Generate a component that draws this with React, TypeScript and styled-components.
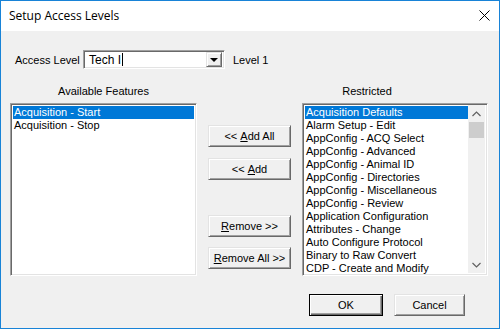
import * as React from 'react';
import styled, { createGlobalStyle } from 'styled-components';

const GlobalStyle = createGlobalStyle`
  html, body {
    margin: 0;
    padding: 0;
    background: #ffffff;
  }
  * {
    box-sizing: border-box;
  }
`;

const Window = styled.div`
  width: 500px;
  height: 329px;
  border: 1px solid #1883d7;
  display: flex;
  flex-direction: column;
  background: #f0f0f0;
  font-family: 'Liberation Sans', Arial, sans-serif;
  font-size: 11px;
  color: #000;
`;

const TitleBar = styled.div`
  height: 30px;
  background: #ffffff;
  display: flex;
  align-items: center;
  justify-content: space-between;
  padding: 0 9px 1px 8px;
`;

const Title = styled.span`
  font-family: 'Open Sans', 'Noto Sans', sans-serif;
  font-size: 12px;
  color: #000;
`;

const Body = styled.div`
  flex: 1;
  display: flex;
  flex-direction: column;
  padding: 0 10px 0 9px;
`;

const AccessRow = styled.div`
  margin-top: 19px;
  height: 19px;
  display: flex;
  align-items: center;
`;

const Label = styled.span<{ $width?: number; $left?: number }>`
  width: ${p => (p.$width ? `${p.$width}px` : 'auto')};
  padding-left: ${p => p.$left ?? 0}px;
  white-space: nowrap;
`;

const Sunken = styled.div`
  background: #ffffff;
  border: 1px solid;
  border-color: #a0a0a0 #ffffff #ffffff #a0a0a0;
  box-shadow: inset 1px 1px 0 #696969, inset -1px -1px 0 #e3e3e3;
`;

const Combo = styled(Sunken)`
  width: 142px;
  height: 19px;
  display: flex;
  align-items: center;
  padding: 2px 2px 2px 5px;
  margin-right: 8px;
`;

const ComboText = styled.span`
  flex: 1;
  display: flex;
  align-items: center;
  font-size: 12px;
`;

const Caret = styled.span`
  display: inline-block;
  width: 1px;
  height: 13px;
  background: #000;
  margin-left: 1px;
`;

const Raised = styled.div`
  background: #f0f0f0;
  border: 1px solid;
  border-color: #e3e3e3 #696969 #696969 #e3e3e3;
  box-shadow: inset 1px 1px 0 #ffffff, inset -1px -1px 0 #a0a0a0;
`;

const DropButton = styled(Raised)`
  width: 16px;
  height: 15px;
  display: flex;
  align-items: center;
  justify-content: center;
`;

const Arrow = styled.span`
  width: 0;
  height: 0;
  border-left: 4px solid transparent;
  border-right: 4px solid transparent;
  border-top: 4px solid #000;
  margin-top: 1px;
`;

const Headers = styled.div`
  margin-top: 16px;
  height: 13px;
  display: grid;
  grid-template-columns: 187px 83px 186px;
  column-gap: 11px;
  line-height: 13px;
`;

const Header = styled.span<{ $shift?: number }>`
  text-align: center;
  transform: translateX(${p => p.$shift ?? 0}px);
`;

const Main = styled.div`
  margin-top: 5px;
  display: grid;
  grid-template-columns: 187px 83px 186px;
  column-gap: 11px;
  height: 173px;
`;

const ListBox = styled(Sunken)`
  padding: 1px 2px 2px 2px;
  display: flex;
  overflow: hidden;
`;

const Items = styled.div`
  flex: 1;
  display: flex;
  flex-direction: column;
  padding-top: 1px;
`;

const Item = styled.div<{ $selected?: boolean }>`
  height: 13px;
  line-height: 13px;
  padding-left: 1px;
  white-space: nowrap;
  flex-shrink: 0;
  background: ${p => (p.$selected ? '#0078d7' : 'transparent')};
  color: ${p => (p.$selected ? '#ffffff' : '#000000')};
`;

const ScrollBar = styled.div`
  width: 17px;
  display: flex;
  flex-direction: column;
  background: #f0f0f0;
`;

const ScrollArrow = styled.div`
  height: 17px;
  display: flex;
  align-items: center;
  justify-content: center;
`;

const Track = styled.div`
  flex: 1;
`;

const Thumb = styled.div`
  height: 16px;
  margin: 0 1px;
  background: #cdcdcd;
`;

const Buttons = styled.div`
  display: flex;
  flex-direction: column;
  padding-top: 22px;
`;

const Button = styled(Raised)<{ $gap?: number; $width?: number }>`
  height: 22px;
  width: ${p => (p.$width ? `${p.$width}px` : '100%')};
  margin-top: ${p => p.$gap ?? 0}px;
  display: flex;
  align-items: center;
  justify-content: center;
  white-space: nowrap;
  font-size: 11px;
`;

const DefaultButton = styled(Button)`
  border-color: #000 #000 #000 #000;
  box-shadow: inset 1px 1px 0 #ffffff, inset -1px -1px 0 #696969,
    inset -2px -2px 0 #a0a0a0;
`;

const Footer = styled.div`
  margin-top: 18px;
  display: flex;
  justify-content: flex-end;
  gap: 11px;
  padding-right: 24px;
`;

const Chevron = ({ up }: { up?: boolean }) => (
  <svg width="9" height="6" viewBox="0 0 9 6">
    <path
      d={up ? 'M0.5 5 L4.5 1 L8.5 5' : 'M0.5 1 L4.5 5 L8.5 1'}
      fill="none"
      stroke="#606060"
      strokeWidth="1.2"
    />
  </svg>
);

const CloseIcon = () => (
  <svg width="11" height="11" viewBox="0 0 11 11">
    <path d="M0.5 0.5 L10.5 10.5 M10.5 0.5 L0.5 10.5" stroke="#000" strokeWidth="1" />
  </svg>
);

const available = ['Acquisition - Start', 'Acquisition - Stop'];

const restricted = [
  'Acquisition Defaults',
  'Alarm Setup - Edit',
  'AppConfig - ACQ Select',
  'AppConfig - Advanced',
  'AppConfig - Animal ID',
  'AppConfig - Directories',
  'AppConfig - Miscellaneous',
  'AppConfig - Review',
  'Application Configuration',
  'Attributes - Change',
  'Auto Configure Protocol',
  'Binary to Raw Convert',
  'CDP - Create and Modify',
];

export default function App() {
  return (
    <>
      <GlobalStyle />
      <Window>
        <TitleBar>
          <Title>Setup Access Levels</Title>
          <CloseIcon />
        </TitleBar>
        <Body>
          <AccessRow>
            <Label $width={73} $left={5}>Access Level</Label>
            <Combo>
              <ComboText>
                Tech I<Caret />
              </ComboText>
              <DropButton>
                <Arrow />
              </DropButton>
            </Combo>
            <Label>Level 1</Label>
          </AccessRow>

          <Headers>
            <Header>Available Features</Header>
            <span />
            <Header $shift={-28}>Restricted</Header>
          </Headers>

          <Main>
            <ListBox>
              <Items>
                {available.map((name, i) => (
                  <Item key={name} $selected={i === 0}>
                    {name}
                  </Item>
                ))}
              </Items>
            </ListBox>

            <Buttons>
              <Button>
                &lt;&lt;&nbsp;<u>A</u>dd All
              </Button>
              <Button $gap={11}>
                &lt;&lt;&nbsp;<u>A</u>dd
              </Button>
              <Button $gap={35}>
                <u>R</u>emove &gt;&gt;
              </Button>
              <Button $gap={10}>
                <u>R</u>emove All &gt;&gt;
              </Button>
            </Buttons>

            <ListBox>
              <Items>
                {restricted.map((name, i) => (
                  <Item key={name} $selected={i === 0}>
                    {name}
                  </Item>
                ))}
              </Items>
              <ScrollBar>
                <ScrollArrow>
                  <Chevron up />
                </ScrollArrow>
                <Track>
                  <Thumb />
                </Track>
                <ScrollArrow>
                  <Chevron />
                </ScrollArrow>
              </ScrollBar>
            </ListBox>
          </Main>

          <Footer>
            <DefaultButton $width={74}>OK</DefaultButton>
            <Button $width={71}>Cancel</Button>
          </Footer>
        </Body>
      </Window>
    </>
  );
}
